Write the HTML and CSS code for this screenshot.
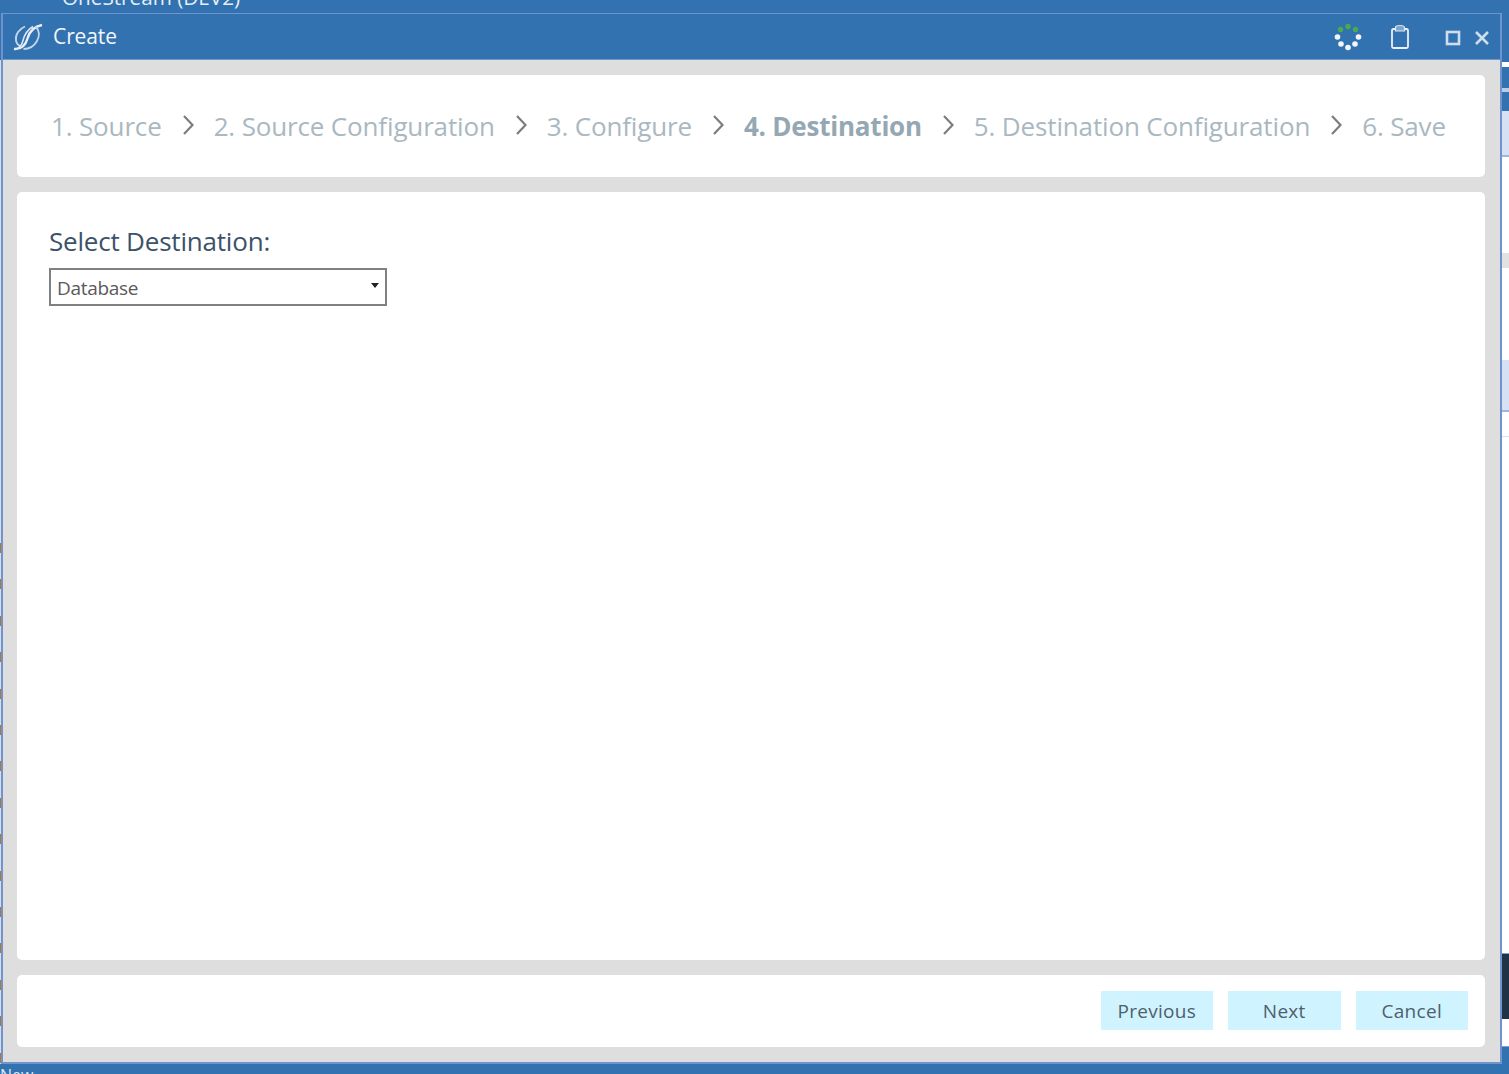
FILE: index.html
```html
<!DOCTYPE html>
<html lang="en">
<head>
<meta charset="utf-8">
<title>Create</title>
<link rel="stylesheet" href="styles.css">
</head>
<body>
<div class="desktop">
  <div class="behind-title">OneStream (DEV2)</div>
  <div class="behind-status">New</div>
  <div class="left-strip"></div>
  <div class="right-strip">
    <div class="s s1"></div><div class="s s2"></div><div class="s s3"></div><div class="s s4"></div><div class="s s5"></div>
    <div class="s s6"></div><div class="s s7"></div><div class="s s8"></div><div class="s s9"></div><div class="s s10"></div>
    <div class="s s11"></div><div class="s s12"></div><div class="s s13"></div><div class="s s14"></div><div class="s s15"></div>
    <div class="s s16"></div><div class="s s17"></div><div class="s s18"></div>
  </div>
  <div class="window">
    <header class="titlebar">
      <svg class="logo" width="30" height="30" viewBox="0 0 30 30" fill="none">
        <path d="M1 27C8 27.500 12.500 23.500 14.500 16.500S20 4.500 29 3" stroke="#e8eff6" stroke-width="2.400"/>
        <path d="M12 4.500C6 7 2 12.500 3 18.500C3.500 21.500 5.500 23.500 8 24.500" stroke="#c3d6e8" stroke-width="1.800"/>
        <path d="M22.500 4.500C26.500 8 27 14 24 19C21.500 23.500 16.500 27 10.500 27" stroke="#c3d6e8" stroke-width="1.800"/>
        <path d="M20 4.500C15 7.500 11.500 12.500 10 18.500C9.300 21.500 8 24.500 4 26.800" stroke="#dfe9f3" stroke-width="1.500"/>
      </svg>
      <span class="title">Create</span>
      <div class="controls">
        <svg class="spinner" width="30" height="30" viewBox="0 0 30 30">
          <circle cx="15" cy="4.500" r="2.700" fill="#4aaa4e"/>
          <circle cx="7.500" cy="7.500" r="2.700" fill="#4aaa4e"/>
          <circle cx="22.500" cy="7.500" r="2.700" fill="#4aaa4e"/>
          <circle cx="4.500" cy="15" r="2.800" fill="#f2f6fa"/>
          <circle cx="25.500" cy="15" r="2.800" fill="#f2f6fa"/>
          <circle cx="8" cy="22" r="2.800" fill="#f2f6fa"/>
          <circle cx="22" cy="22" r="2.800" fill="#f2f6fa"/>
          <circle cx="15" cy="25.500" r="2.800" fill="#f2f6fa"/>
        </svg>
        <svg class="clip" width="20" height="26" viewBox="0 0 20 26" fill="none">
          <path d="M5 5H3.500Q2 5 2 6.500V22.500Q2 24 3.500 24H16.500Q18 24 18 22.500V6.500Q18 5 16.500 5H15" stroke="#eaf1f7" stroke-width="1.800"/>
          <path d="M5.500 7V3.500C5.500 2 7 1.500 10 1.500S14.500 2 14.500 3.500V7Z" fill="#7ea5cb" stroke="#dfe9f3" stroke-width="1.200"/>
        </svg>
        <svg class="max" width="16" height="16" viewBox="0 0 16 16" fill="none">
          <rect x="2" y="2" width="12" height="12" stroke="#cfdeec" stroke-width="2.600"/>
        </svg>
        <svg class="close" width="16" height="16" viewBox="0 0 16 16" fill="none">
          <path d="M2 2L14 14M14 2L2 14" stroke="#cfdeec" stroke-width="2.600"/>
        </svg>
      </div>
    </header>
    <main class="content">
      <nav class="panel steps">
        <span class="step">1. Source</span><svg class="chev" width="12" height="24" viewBox="0 0 12 24" fill="none"><path d="M2 3L10.500 12L2 21" stroke="#7d7d7d" stroke-width="2.200"/></svg>
        <span class="step">2. Source Configuration</span><svg class="chev" width="12" height="24" viewBox="0 0 12 24" fill="none"><path d="M2 3L10.500 12L2 21" stroke="#7d7d7d" stroke-width="2.200"/></svg>
        <span class="step">3. Configure</span><svg class="chev" width="12" height="24" viewBox="0 0 12 24" fill="none"><path d="M2 3L10.500 12L2 21" stroke="#7d7d7d" stroke-width="2.200"/></svg>
        <span class="step active">4. Destination</span><svg class="chev" width="12" height="24" viewBox="0 0 12 24" fill="none"><path d="M2 3L10.500 12L2 21" stroke="#7d7d7d" stroke-width="2.200"/></svg>
        <span class="step">5. Destination Configuration</span><svg class="chev" width="12" height="24" viewBox="0 0 12 24" fill="none"><path d="M2 3L10.500 12L2 21" stroke="#7d7d7d" stroke-width="2.200"/></svg>
        <span class="step">6. Save</span>
      </nav>
      <section class="panel body">
        <div class="label">Select Destination:</div>
        <div class="select"><span>Database</span><i class="arrow"></i></div>
      </section>
      <footer class="panel actions">
        <button class="btn">Previous</button>
        <button class="btn">Next</button>
        <button class="btn">Cancel</button>
      </footer>
    </main>
  </div>
</div>
</body>
</html>
```

FILE: styles.css
```css
* { box-sizing: border-box; }
html, body { margin: 0; height: 100%; overflow: hidden; }
body { font-family: "Open Sans", "Noto Sans", sans-serif; }

.desktop { position: relative; width: 1509px; height: 1074px; background: #3272b0; overflow: hidden; }

.behind-title { position: absolute; left: 62px; top: -15px; font-size: 20.7px; line-height: 24px; color: #e6eef6; white-space: nowrap; }
.behind-status { position: absolute; left: 0; top: 1065px; font-size: 16px; line-height: 20px; color: #dfe9f3; }

.left-strip {
  position: absolute; left: 0; top: 60px; width: 1px; height: 1004px;
  background:
    repeating-linear-gradient(to bottom, #b5752f 0, #b5752f 10px, #d5dcea 10px, #d5dcea 36.4px) 0 483px / 100% 521px no-repeat,
    #d5dcea;
}

.right-strip { position: absolute; left: 1501px; top: 0; width: 8px; height: 1074px; display: flex; flex-direction: column; }
.s { flex: none; }
.s1 { height: 62px; background: #3272b0; }
.s2 { height: 5px; background: #fff; }
.s3 { height: 21px; background: #3272b0; }
.s4 { height: 4px; background: #b9cbe6; }
.s5 { height: 19px; background: #3272b0; }
.s6 { height: 44px; background: #d6e1f6; }
.s7 { height: 2px; background: #9fb6dd; }
.s8 { height: 96px; background: #fff; }
.s9 { height: 15px; background: #e2e2e2; }
.s10 { height: 92px; background: #fff; }
.s11 { height: 50px; background: #d6e1f6; }
.s12 { height: 2px; background: #9fb6dd; }
.s13 { height: 24px; background: #fff; }
.s14 { height: 1px; background: #d6e1f6; }
.s15 { height: 516px; background: #fff; }
.s16 { height: 66px; border-top: 1px solid #7f9fd6; background: #1f3347; }
.s17 { height: 27px; background: #fff; }
.s18 { height: 18px; background: #3272b0; border-top: 1px solid #7f9fd6; }

.window {
  position: absolute; left: 1px; top: 13px; width: 1501px; height: 1051px;
  border: 2px solid #6f93cc; border-width: 1px 2px 2px 2px;
  display: flex; flex-direction: column; background: #dedede;
}

.titlebar { flex: none; height: 46px; background: #3272b0; border-bottom: 1px solid #7099c8; display: flex; align-items: center; padding: 0 10px 0 10px; color: #f2f6fa; }
.logo { flex: none; margin-right: 10px; }
.title { font-size: 21px; letter-spacing: -0.1px; line-height: 28px; margin-top: -1px; }
.controls { margin-left: auto; display: flex; align-items: center; }
.spinner { margin-right: 27px; margin-left: -6px; }
.clip { margin-right: 35px; }
.max { margin-right: 13px; margin-top: 2px; }
.close { margin-top: 2px; }

.content { flex: 1; display: flex; flex-direction: column; gap: 15px; padding: 15px 15px 15px 14px; min-height: 0; }
.panel { background: #fff; border-radius: 5px; }

.steps { flex: none; height: 102px; display: flex; align-items: center; padding: 0 0 0 34px; }
.step { font-size: 26px; letter-spacing: -0.15px; line-height: 34px; color: #a9b8c1; white-space: nowrap; }
.step.active { font-weight: 700; letter-spacing: -0.22px; color: #94a8b3; }
.chev { flex: none; margin: -3px 20px 0 20px; }

.body { flex: 1; padding: 31px 32px; min-height: 0; }
.label { font-size: 26px; letter-spacing: -0.2px; line-height: 36px; color: #3c5268; }
.select {
  margin-top: 9px; width: 338px; height: 38px; border: 2px solid #808080; background: #fff;
  display: flex; align-items: center; justify-content: space-between; padding: 2px 6px 0 6px;
  font-size: 19px; letter-spacing: -0.3px; color: #5a5a5a;
}
.arrow { display: block; width: 0; height: 0; border-left: 4px solid transparent; border-right: 4px solid transparent; border-top: 5px solid #222; margin-top: -6px; }

.actions { flex: none; height: 72px; display: flex; align-items: center; justify-content: flex-end; gap: 15px; padding: 0 17px 2px 0; }
.btn {
  width: 112.5px; height: 39px; border: 0; background: #cff3ff; padding: 2px 0 0;
  font-family: "Open Sans", sans-serif; font-size: 19px; letter-spacing: 0.3px; color: #4f5f6b;
}
```
